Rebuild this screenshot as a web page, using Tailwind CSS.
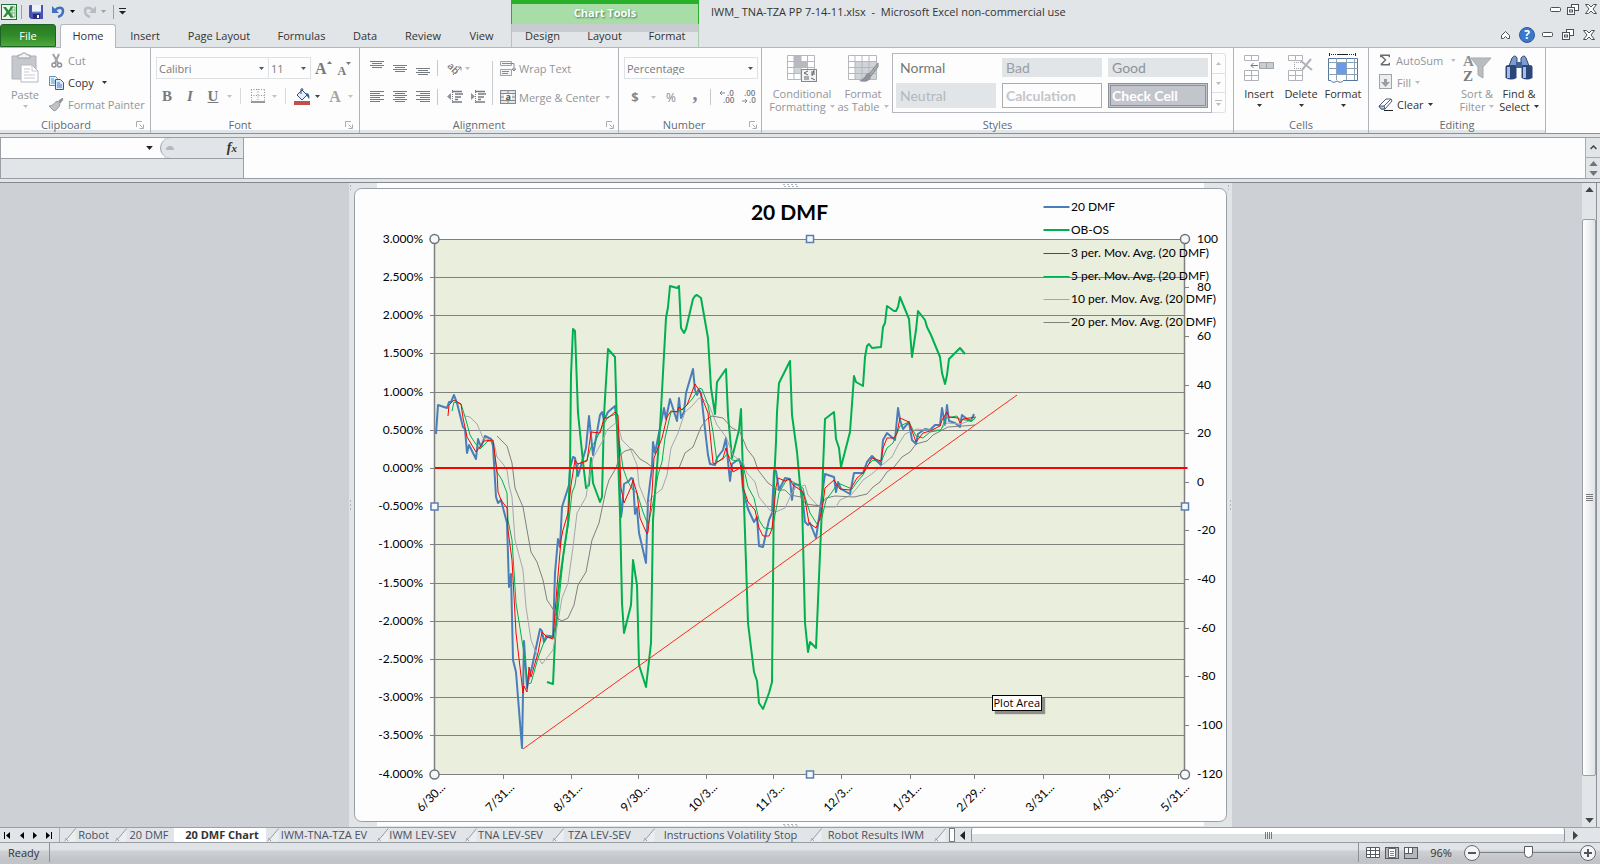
<!DOCTYPE html>
<html lang="en">
<head>
    <meta charset="UTF-8">
    <meta name="viewport" content="width=device-width, initial-scale=1.0">
    <title>IWM_ TNA-TZA PP 7-14-11.xlsx - Microsoft Excel</title>
    <script src="https://cdn.jsdelivr.net/npm/@tailwindcss/browser@4"></script>
</head>

<body class="flex flex-col h-screen overflow-hidden bg-[#e1e5e8] font-['Open_Sans',sans-serif] text-[11px] leading-[13px] text-[#333]">

    <!-- Shared icon shapes -->
    <svg class="hidden">
        <symbol id="down" viewBox="0 0 5 3"><path d="M0 0h5L2.500 3z" fill="currentColor"/></symbol>
        <symbol id="launch" viewBox="0 0 8 8"><path d="M.5 6V.5H6M3.500 3.500l3 3M7.500 3.500v4h-4" fill="none" stroke="#a9adb3"/></symbol>
        <symbol id="min" viewBox="0 0 11 5"><rect x=".5" y=".5" width="10" height="4" rx="1" fill="#fff" stroke="#4c5057"/></symbol>
        <symbol id="restore" viewBox="0 0 12 11"><rect x="4.500" y=".5" width="7" height="6" fill="#fff" stroke="#4c5057"/><rect x=".5" y="3.500" width="7" height="7" fill="#fff" stroke="#4c5057"/><rect x="2.500" y="6" width="3" height="2" fill="#fff" stroke="#4c5057"/></symbol>
        <symbol id="close" viewBox="0 0 12 10"><path d="M.5.5h3L6 3 8.500.5h3L8 5l3.500 4.500h-3L6 7 3.500 9.500h-3L4 5z" fill="#fff" stroke="#4c5057"/></symbol>
        <symbol id="slash" viewBox="0 0 14 15"><path d="M0 14.500C4 14 5 9 13 .5V14.500z" fill="#eceff1"/><path d="M1 14Q3 13 13 .5M2 11l3 3" fill="none" stroke="#8e9299"/></symbol>
    </svg>

    <!-- Title bar and ribbon tabs -->
    <header class="flex shrink-0 h-12">
        <div class="flex flex-col w-[511px] shrink-0">
            <div class="flex items-center h-6 pb-px pl-[1px]">
                <button aria-label="Excel"><svg width="16" height="16" viewBox="0 0 16 16"><rect x=".5" y=".5" width="15" height="15" fill="#eef7ea" stroke="#1f7238"/><path d="M9 3h5v10H9M11 3v10M9 6h5M9 9h5" stroke="#7db882" fill="none"/><path d="M2 3h3l2.500 3.500L10 2.500h2.500L9 8l3.500 5.500h-3L7 10l-2.500 3H2l3.500-5z" fill="#2c8a3c"/></svg></button>
                <i class="w-px h-3.5 ml-1 bg-[#9a9ea5]"></i>
                <button aria-label="Save" class="ml-[7px]"><svg width="15" height="14" viewBox="0 0 15 14"><path d="M0 1q0-1 1-1h13v14H2l-2-2z" fill="#4b4fb8"/><rect x="3" width="9" height="7" fill="#eef3fb"/><path d="M3 7h9" stroke="#6fa6e0"/><rect x="4" y="9" width="7" height="5" fill="#2b2e70"/><rect x="8" y="10" width="2" height="3" fill="#fff"/></svg></button>
                <button aria-label="Undo" class="ml-2"><svg width="13" height="13" viewBox="0 0 13 13"><path d="M3 5.500C6 1.500 11 2 11 6c0 3-2 5-5 6" fill="none" stroke="#3f6fc1" stroke-width="2.500"/><path d="M0 1v7h7z" fill="#3f6fc1"/></svg></button>
                <svg class="w-[5px] h-[3px] ml-[5px] text-black"><use href="#down"/></svg>
                <button aria-label="Redo" class="ml-2"><svg width="13" height="13" viewBox="0 0 13 13"><path d="M10 5.500C7 1.500 2 2 2 6c0 3 2 5 5 6" fill="none" stroke="#b9bdc2" stroke-width="2.500"/><path d="M13 1v7H6z" fill="#b9bdc2"/></svg></button>
                <svg class="w-[5px] h-[3px] ml-[5px] text-[#9a9ea5]"><use href="#down"/></svg>
                <i class="w-px h-3.5 ml-[7px] bg-[#9a9ea5]"></i>
                <button aria-label="Customize" class="ml-[5px]"><svg width="7" height="7" viewBox="0 0 7 7"><path d="M0 .5h7" stroke="#222"/><path d="M0 3h7L3.500 6.500z" fill="#222"/></svg></button>
            </div>
            <nav class="flex h-6 border-b border-[#b3b7bd]">
                <button class="w-14 h-[23px] text-white border border-[#1d6326] rounded-t-[3px] bg-linear-to-b from-[#2b7a22] via-[#2f8a2a] to-[#4fa83a]">File</button>
                <button class="w-14 h-6 ml-1 pb-0.5 border border-b-0 border-[#b3b7bd] rounded-t-[3px] bg-[#fdfdfd]">Home</button>
                <button class="w-[58px]">Insert</button>
                <button class="w-[90px]">Page Layout</button>
                <button class="w-[75px]">Formulas</button>
                <button class="w-[52px]">Data</button>
                <button class="w-16">Review</button>
                <button class="w-[53px]">View</button>
            </nav>
        </div>
        <div class="flex flex-col w-[188px] shrink-0 border-b border-[#b3b7bd]">
            <div class="h-[25px] border-x border-t-4 border-[#28b028] bg-[#a9dda7] text-center font-bold leading-[18px] text-white [text-shadow:1px_1px_2px_#3b7a4a]">Chart Tools</div>
            <nav class="flex flex-1 -mt-px bg-linear-to-b from-[#c8ccd0] from-35% to-[#e1e5e8] to-35% border-x border-[#a9cbb0]">
                <button class="w-[61px]">Design</button>
                <button class="w-[63px]">Layout</button>
                <button class="w-[62px]">Format</button>
            </nav>
        </div>
        <div class="flex flex-col flex-1 justify-between border-b border-[#b3b7bd]">
            <div class="flex justify-between h-6 pl-3 pr-[3px]">
                <h1 class="pt-[5px] whitespace-pre">IWM_ TNA-TZA PP 7-14-11.xlsx  -  Microsoft Excel non-commercial use</h1>
                <div class="flex items-center h-[18px] gap-1.5">
                    <button aria-label="Minimize"><svg class="w-[11px] h-[5px]"><use href="#min"/></svg></button>
                    <button aria-label="Restore"><svg class="w-3 h-[11px]"><use href="#restore"/></svg></button>
                    <button aria-label="Close"><svg class="w-3 h-2.5"><use href="#close"/></svg></button>
                </div>
            </div>
            <div class="flex items-center justify-end h-[23px] gap-[9px] pb-0.5 pr-[5px]">
                <button aria-label="Minimize ribbon"><svg width="9" height="8" viewBox="0 0 9 8"><path d="M.5 4.500l4-4 4 4v3h-2l-2-2-2 2h-2z" fill="#fff" stroke="#4c5057"/></svg></button>
                <button aria-label="Help" class="w-4 h-4 -mr-0.5 rounded-full bg-[#3c78c8] border border-[#2a5ca8] text-white font-bold text-[12px] leading-[14px]">?</button>
                <button aria-label="Minimize workbook"><svg class="w-[11px] h-[5px]"><use href="#min"/></svg></button>
                <button aria-label="Restore workbook"><svg class="w-3 h-[11px]"><use href="#restore"/></svg></button>
                <button aria-label="Close workbook"><svg class="w-3 h-2.5"><use href="#close"/></svg></button>
            </div>
        </div>
    </header>

    <main class="contents">
    <!-- Ribbon -->
    <div class="flex shrink-0 h-[86px] bg-[#fdfdfd] border-b border-[#8c9097] text-[#929599]">

        <section class="flex flex-col w-[151px] shrink-0 border-r border-[#b0b4ba]">
            <div class="flex h-[68px] pt-px pl-[10px]">
                <button class="flex flex-col items-center w-[30px] pt-[3px]">
                    <svg width="28" height="31" viewBox="0 0 28 31"><path d="M1 4h24v23H1z" fill="#c5c9ce" stroke="#aeb2b7"/><path d="M7 6V3h3q0-2 3-2t3 2h3v3z" fill="#f3f4f6" stroke="#9a9ea3"/><path d="M10 13h11l6 6v11H10z" fill="#fff" stroke="#b4b7bc"/><path d="M21 13v6h6M13 17h6M13 20h5M13 23h11M13 26h11" fill="none" stroke="#c6c9ce"/></svg>
                    <span class="mt-[5px]">Paste</span>
                    <svg class="w-[5px] h-[3px] mt-1 text-[#b9bdc2]"><use href="#down"/></svg>
                </button>
                <div class="flex flex-col ml-[9px]">
                    <button class="flex items-center h-[22px] gap-1"><svg width="15" height="15" viewBox="0 0 15 15"><path d="M4 1l5 9M10 1L6 10" stroke="#9fa3a8" stroke-width="2"/><circle cx="5" cy="12" r="2" fill="none" stroke="#8e9297" stroke-width="1.500"/><circle cx="10.500" cy="12" r="2" fill="none" stroke="#8e9297" stroke-width="1.500"/></svg>Cut</button>
                    <button class="flex items-center h-[22px] gap-1 text-[#333]"><svg width="15" height="15" viewBox="0 0 15 15"><path d="M.5 1.500h6l2 2v7h-8z" fill="#e8f3fc" stroke="#5f8db8"/><path d="M2 4h3M2 6h4M2 8h4" stroke="#4f9ad6"/><path d="M6.500 4.500h5l3 3v7h-8z" fill="#dbe9fb" stroke="#2d5ea8"/><path d="M8 8h3M8 10h5M8 12h5" stroke="#3c78c8"/></svg>Copy<svg class="w-[5px] h-[3px] ml-1"><use href="#down"/></svg></button>
                    <button class="flex items-center h-[22px] gap-1"><svg width="15" height="15" viewBox="0 0 15 15"><path d="M9 4l4-3q2 0 1 2l-3 4z" fill="#8f9398"/><path d="M0 9c4 0 5-3 8-5l3 4c-2 3-3 5-6 6z" fill="#bfc3c8" stroke="#94989d"/></svg>Format Painter</button>
                </div>
            </div>
            <div class="flex items-center h-[17px] border-b-[3px] border-[#e1e5e8] text-[#5f6b76] pr-1.5"><h2 class="flex-1 pt-0.5 pr-1 text-center">Clipboard</h2><button aria-label="Clipboard options"><svg class="w-2 h-2 mt-1"><use href="#launch"/></svg></button></div>
        </section>

        <section class="flex flex-col w-[209px] shrink-0 border-r border-[#b0b4ba]">
            <div class="flex flex-col h-[68px] pt-[9px] pl-[5px]">
                <div class="flex h-[22px] text-[#777b80]">
                    <label class="flex items-center w-[113px] border border-[#dfe2e5] pr-1"><select aria-label="Font" class="flex-1 min-w-0 h-5 appearance-none outline-none pl-0.5"><option>Calibri</option></select><svg class="w-[5px] h-[3px] text-[#555]"><use href="#down"/></svg></label>
                    <label class="flex items-center w-[43px] -ml-px border border-[#dfe2e5] pr-1"><select aria-label="Font size" class="flex-1 min-w-0 h-5 appearance-none outline-none pl-0.5"><option>11</option></select><svg class="w-[5px] h-[3px] text-[#555]"><use href="#down"/></svg></label>
                    <button class="flex items-start ml-1 font-['Liberation_Serif',serif] font-bold text-[16px] leading-[24px]">A<svg class="w-[5px] h-[3px] mt-1 rotate-180"><use href="#down"/></svg></button>
                    <button class="flex items-start ml-1.5 font-['Liberation_Serif',serif] font-bold text-[12px] leading-[28px]">A<svg class="w-[5px] h-[3px] mt-[5px]"><use href="#down"/></svg></button>
                </div>
                <div class="flex items-center h-[22px] mt-1.5 pl-1 font-['Liberation_Serif',serif] text-[15px] text-[#777b80]">
                    <button class="w-[14px] font-bold">B</button>
                    <button class="w-[14px] ml-[9px] italic font-bold">I</button>
                    <button class="w-[14px] ml-[9px] underline font-bold">U</button>
                    <svg class="w-[5px] h-[3px] ml-[7px] text-[#c0c3c8]"><use href="#down"/></svg>
                    <i class="w-px h-4 ml-2 bg-[#d5d8dc]"></i>
                    <button aria-label="Borders" class="ml-[10px]"><svg width="14" height="14" viewBox="0 0 14 14"><path d="M.5.5v12M13.500.5v12M0 .5h14M7 0v12M0 6.500h14" stroke="#8e9297" stroke-dasharray="1 1.500" fill="none"/><path d="M0 13h14" stroke="#777" stroke-width="1.500"/></svg></button>
                    <svg class="w-[5px] h-[3px] ml-[7px] text-[#c0c3c8]"><use href="#down"/></svg>
                    <i class="w-px h-4 ml-2 bg-[#d5d8dc]"></i>
                    <button aria-label="Fill color" class="ml-2"><svg width="16" height="17" viewBox="0 0 16 17"><path d="M3 7l5-5 5 5-5 5z" fill="#e5eefa" stroke="#2f4f86"/><path d="M7 6V1q2-1 2 1" fill="none" stroke="#2f4f86"/><path d="M12 5c3 0 4 3 3 6l-2-3z" fill="#2d5ea8"/><rect y="13" width="16" height="4" fill="#c0504d"/></svg></button>
                    <svg class="w-[5px] h-[3px] ml-[5px] text-[#444]"><use href="#down"/></svg>
                    <button class="w-3 ml-[9px] font-bold text-[16px] text-[#a0a4a8]">A</button>
                    <svg class="w-[5px] h-[3px] ml-[7px] text-[#c0c3c8]"><use href="#down"/></svg>
                </div>
            </div>
            <div class="flex items-center h-[17px] border-b-[3px] border-[#e1e5e8] text-[#5f6b76] pr-1.5"><h2 class="flex-1 pt-0.5 pr-4 text-center">Font</h2><button aria-label="Font options"><svg class="w-2 h-2 mt-1"><use href="#launch"/></svg></button></div>
        </section>

        <section class="flex flex-col w-[259px] shrink-0 border-r border-[#b0b4ba]">
            <div class="flex h-[68px] pt-[9px] pl-[10px]">
                <div class="flex flex-col w-[122px] gap-[7px]">
                    <div class="flex items-center h-[22px] gap-[9px]">
                        <button aria-label="Top align"><svg width="14" height="16" viewBox="0 0 14 16"><path d="M0 1.500h14M2 3.500h10M0 5.500h14M2 7.500h10" stroke="#777b80"/></svg></button>
                        <button aria-label="Middle align"><svg width="14" height="16" viewBox="0 0 14 16"><path d="M0 5.500h14M2 7.500h10M0 9.500h14M2 11.500h10" stroke="#777b80"/></svg></button>
                        <button aria-label="Bottom align"><svg width="14" height="16" viewBox="0 0 14 16"><path d="M0 8.500h14M2 10.500h10M0 12.500h14M2 14.500h10" stroke="#777b80"/></svg></button>
                        <i class="w-px h-4 -ml-0.5 bg-[#c4c8cd]"></i>
                        <button aria-label="Orientation" class="flex items-center"><svg class="overflow-visible" width="16" height="15" viewBox="0 0 16 15"><text x="0" y="9" transform="rotate(45 4 7)" font-family="Open Sans" font-size="10" font-weight="600" fill="#777b80">ab</text><path d="M6 14l8-8M10.500 6H14v3.500" fill="none" stroke="#85898e"/></svg><svg class="w-[5px] h-[3px] ml-0.5 text-[#b9bdc2]"><use href="#down"/></svg></button>
                    </div>
                    <div class="flex items-center h-[22px] gap-[9px]">
                        <button aria-label="Align left"><svg width="14" height="12" viewBox="0 0 14 12"><path d="M0 .5h14M0 2.500h10M0 4.500h14M0 6.500h10M0 8.500h14M0 10.500h10" stroke="#777b80"/></svg></button>
                        <button aria-label="Center"><svg width="14" height="12" viewBox="0 0 14 12"><path d="M0 .5h14M2 2.500h10M0 4.500h14M2 6.500h10M0 8.500h14M2 10.500h10" stroke="#777b80"/></svg></button>
                        <button aria-label="Align right"><svg width="14" height="12" viewBox="0 0 14 12"><path d="M0 .5h14M4 2.500h10M0 4.500h14M4 6.500h10M0 8.500h14M4 10.500h10" stroke="#777b80"/></svg></button>
                        <i class="w-px h-4 -ml-0.5 bg-[#c4c8cd]"></i>
                        <button aria-label="Decrease indent"><svg width="16" height="14" viewBox="0 0 16 14"><path d="M5 1.500h10M8 4h8M8 7h6M8 9.500h3M5 12h10" stroke="#777b80" stroke-width="1.500"/><path d="M5.500 0v14" stroke="#777b80" stroke-dasharray="1 1"/><path d="M0 6.500L4 3v7z" fill="#8e9297"/></svg></button>
                        <button aria-label="Increase indent" class="-ml-0.5"><svg width="16" height="14" viewBox="0 0 16 14"><path d="M5 1.500h10M8 4h8M8 7h6M8 9.500h3M5 12h10" stroke="#777b80" stroke-width="1.500"/><path d="M5.500 0v14" stroke="#777b80" stroke-dasharray="1 1"/><path d="M5 6.500L1 3v7z" fill="#8e9297"/></svg></button>
                    </div>
                </div>
                <div class="w-px h-11 mt-1 bg-[#c9cdd2]"></div>
                <div class="flex flex-col gap-[7px] ml-[7px]">
                    <button class="flex items-center h-[22px] gap-[3px]"><svg width="16" height="15" viewBox="0 0 16 15"><path d="M.5.5h11v4H.5zM.5 8.500h11v6H.5z" fill="#f4f5f6" stroke="#a0a4a9"/><path d="M2 2.500h12v6M2 10.500h7M2 12.500h6M14 10l-2-2h4z" stroke="#85898e" fill="none"/></svg>Wrap Text</button>
                    <button class="flex items-center h-[22px] gap-[3px]"><svg width="16" height="14" viewBox="0 0 16 14"><rect x=".5" y=".5" width="15" height="13" fill="#e3e5e8" stroke="#85898e"/><path d="M0 3.500h16M0 10.500h16M8 0v3.500M8 10.500V14M1 7h3M12 7h3" stroke="#85898e"/><path d="M4 4h8v6H4z" fill="#fff"/><text x="5.500" y="10" font-family="Open Sans" font-weight="bold" font-size="9" fill="#555">a</text></svg>Merge &amp; Center<svg class="w-[5px] h-[3px] ml-0.5 text-[#b9bdc2]"><use href="#down"/></svg></button>
                </div>
            </div>
            <div class="flex items-center h-[17px] border-b-[3px] border-[#e1e5e8] text-[#5f6b76] pr-1"><h2 class="flex-1 pt-0.5 pr-2 text-center">Alignment</h2><button aria-label="Alignment options"><svg class="w-2 h-2 mt-1"><use href="#launch"/></svg></button></div>
        </section>

        <section class="flex flex-col w-[143px] shrink-0 border-r border-[#b0b4ba]">
            <div class="flex flex-col h-[68px] pt-[9px] pl-[5px] pr-[3px]">
                <label class="flex items-center w-full h-[22px] border border-[#dfe2e5] pr-1 text-[#777b80]"><select aria-label="Number format" class="flex-1 min-w-0 h-5 appearance-none outline-none pl-0.5"><option>Percentage</option></select><svg class="w-[5px] h-[3px] text-[#555]"><use href="#down"/></svg></label>
                <div class="flex items-center h-[22px] mt-[7px] pl-[7px] text-[#85898e]">
                    <button class="w-2 font-bold text-[13px]">$</button>
                    <svg class="w-[5px] h-[3px] ml-3 text-[#c0c3c8]"><use href="#down"/></svg>
                    <button class="w-3 ml-[9px] text-[12px]">%</button>
                    <button class="w-1.5 ml-[15px] font-['Liberation_Serif',serif] font-bold text-[20px] leading-5 pb-2">,</button>
                    <i class="w-px h-4 ml-3 bg-[#c4c8cd]"></i>
                    <button aria-label="Increase decimal" class="ml-2"><svg class="overflow-visible" width="17" height="14" viewBox="0 0 17 14" font-family="Open Sans" font-size="8" font-weight="600" fill="#777b80"><path d="M1 3h5M3 1L1 3l2 2" stroke="#85898e" fill="none"/><text x="8" y="6">.0</text><text x="4" y="13">.00</text></svg></button>
                    <button aria-label="Decrease decimal" class="ml-[5px]"><svg class="overflow-visible" width="17" height="14" viewBox="0 0 17 14" font-family="Open Sans" font-size="8" font-weight="600" fill="#777b80"><text x="3" y="6">.00</text><text x="8" y="13">.0</text><path d="M1 11h5M4 9l2 2-2 2" stroke="#85898e" fill="none"/></svg></button>
                </div>
            </div>
            <div class="flex items-center h-[17px] border-b-[3px] border-[#e1e5e8] text-[#5f6b76] pr-1"><h2 class="flex-1 pt-0.5 text-center">Number</h2><button aria-label="Number options"><svg class="w-2 h-2 mt-1"><use href="#launch"/></svg></button></div>
        </section>

        <section class="flex flex-col w-[472px] shrink-0 border-r border-[#b0b4ba]">
            <div class="flex h-[68px] pt-[5px] pl-[6px]">
                <button class="flex flex-col items-center w-[68px]">
                    <svg width="32" height="30" viewBox="0 0 32 30"><path d="M1.500 2.500h27v24h-27z" fill="#fff" stroke="#b4b7bc"/><path d="M8 3h7v6h6v6H8z" fill="#b7bbc0"/><path d="M8 15h7v6H8z" fill="#d0d3d7"/><path d="M8 2v24M15 2v24M21.500 2v24M1 8.500h27M1 14.500h27M1 20.500h27" stroke="#b4b7bc"/><rect x="15.500" y="16.500" width="15" height="12" fill="#f2f3f4" stroke="#85898e"/><path d="M22 18l-4 2 4 2M18 24h5M18 26h5M25 19h4M25 21h4M28 17l-2 6M25 25l4 2" stroke="#666" fill="none"/></svg>
                    <span class="mt-1">Conditional</span>
                    <span class="flex items-center gap-1">Formatting <svg class="w-[5px] h-[3px] text-[#b9bdc2]"><use href="#down"/></svg></span>
                </button>
                <button class="flex flex-col items-center w-[54px]">
                    <svg width="32" height="30" viewBox="0 0 32 30"><path d="M1.500 2.500h28v24h-28z" fill="#fff" stroke="#b4b7bc"/><path d="M8 8h21v18H8z" fill="#d0d4d9"/><path d="M8 2v24M15 2v24M22 2v24M1 8.500h28M1 14.500h28M1 20.500h28" stroke="#b4b7bc"/><path d="M31 10L22 21l2 2 7-9z" fill="#a6aaaf" stroke="#888"/><path d="M22 20c-4 0-3 5-10 8 6 2 12 0 12-5z" fill="#8e9297"/></svg>
                    <span class="mt-1">Format</span>
                    <span class="flex items-center gap-1 whitespace-nowrap">as Table <svg class="w-[5px] h-[3px] text-[#b9bdc2]"><use href="#down"/></svg></span>
                </button>
                <div class="grid grid-cols-[100px_100px_100px] gap-x-1.5 gap-y-1.5 h-[60px] ml-0.5 py-1 px-[3px] border border-[#b3b7bd] font-['Lato',sans-serif] text-[14px] text-left">
                    <button class="pl-1 text-left text-[#777]">Normal</button>
                    <button class="pl-1 text-left bg-[#e1e5e8] text-[#9a9da1]">Bad</button>
                    <button class="pl-1 text-left bg-[#e1e5e8] text-[#8e9297]">Good</button>
                    <button class="pl-1 text-left bg-[#e1e5e8] text-[#b4b8bc]">Neutral</button>
                    <button class="pl-[3px] text-left font-bold border border-[#a9adb2] text-[#c2c5cb]">Calculation</button>
                    <button class="pl-px text-left font-bold border-[3px] border-double border-[#8c9097] bg-[#c3c5cc] text-white">Check Cell</button>
                </div>
                <div class="flex flex-col w-[14px] h-[60px] border border-l-0 border-[#dfe2e5] rounded-r-[3px] text-[#b9bdc2] divide-y divide-[#dfe2e5]">
                    <button aria-label="Scroll up" class="flex-1 flex items-center justify-center"><svg class="w-[5px] h-[3px] rotate-180"><use href="#down"/></svg></button>
                    <button aria-label="Scroll down" class="flex-1 flex items-center justify-center"><svg class="w-[5px] h-[3px]"><use href="#down"/></svg></button>
                    <button aria-label="More styles" class="flex-1 flex flex-col items-center justify-center gap-0.5"><i class="w-[7px] h-px bg-[#b9bdc2]"></i><svg class="w-[5px] h-[3px]"><use href="#down"/></svg></button>
                </div>
            </div>
            <h2 class="h-[17px] pt-0.5 text-center border-b-[3px] border-[#e1e5e8] text-[#5f6b76]">Styles</h2>
        </section>

        <section class="flex flex-col w-[135px] shrink-0 border-r border-[#b0b4ba]">
            <div class="flex h-[68px] pt-[5px] pl-[5px] text-[#333]">
                <button class="flex flex-col items-center w-10">
                    <svg width="32" height="30" viewBox="0 0 32 30"><path d="M1.500 2.500h14v5h-14zM8.500 2v5M1.500 17.500h14v10h-14zM8.500 17v10M1 22.500h14" fill="#fff" stroke="#b0b3b8"/><path d="M16.500 9.500h14v6h-14z" fill="#c9ccd0" stroke="#a0a3a8"/><path d="M23.500 9v7" stroke="#a0a3a8"/><path d="M8 12.500h7M10.500 10L8 12.500l2.500 2.500" fill="none" stroke="#777"/></svg>
                    <span class="mt-1">Insert</span>
                    <svg class="w-[5px] h-[3px] mt-1"><use href="#down"/></svg>
                </button>
                <button class="flex flex-col items-center w-[44px]">
                    <svg width="28" height="30" viewBox="0 0 28 30"><path d="M1.500 2.500h14v5h-14zM8.500 2v5M1.500 17.500h14v10h-14zM8.500 17v10M1 22.500h14" fill="#fff" stroke="#b0b3b8"/><path d="M7 9.500h8M7 15.500h8M7.500 9v7" fill="none" stroke="#a0a3a8" stroke-dasharray="1 1"/><path d="M14 8l11 9M24 6l-9 11" fill="none" stroke="#b0b3b8" stroke-width="2"/></svg>
                    <span class="mt-1">Delete</span>
                    <svg class="w-[5px] h-[3px] mt-1"><use href="#down"/></svg>
                </button>
                <button class="flex flex-col items-center w-10">
                    <svg width="31" height="30" viewBox="0 0 31 30"><path d="M1.500 0v3M27.500 0v3" stroke="#222"/><path d="M3 1.500h23" stroke="#222" stroke-dasharray="1 1"/><path d="M9 1.500h11" stroke="#222"/><path d="M.5 5.500h29v22h-29z" fill="#fff" stroke="#56779c"/><path d="M.5 9.500h29M.5 15.500h29M.5 21.500h29M8.500 5v22M18.500 5v22M26.500 5v22" stroke="#8ba2bb"/><path d="M9 10h9v11H9z" fill="#6a9be8"/><path d="M2 27q3 4 7 1q4 3 7-1" fill="#fff" stroke="#56779c"/></svg>
                    <span class="mt-1">Format</span>
                    <svg class="w-[5px] h-[3px] mt-1"><use href="#down"/></svg>
                </button>
            </div>
            <h2 class="h-[17px] pt-0.5 text-center border-b-[3px] border-[#e1e5e8] text-[#5f6b76]">Cells</h2>
        </section>

        <section class="flex flex-col w-[177px] shrink-0 border-r border-[#b0b4ba]">
            <div class="flex h-[68px] pt-px pl-[9px]">
                <div class="flex flex-col w-[78px]">
                    <button class="flex items-center h-[22px] gap-1"><svg width="15" height="12" viewBox="0 0 15 12"><path d="M3 3V1h9v2M3 1l5 5-5 5M3 11h9V9" fill="none" stroke="#666a70" stroke-width="1.500"/></svg>AutoSum<svg class="w-[5px] h-[3px] ml-1 text-[#b9bdc2]"><use href="#down"/></svg></button>
                    <button class="flex items-center h-[22px] gap-1"><svg width="15" height="16" viewBox="0 0 15 16"><rect x="1.500" y=".5" width="12" height="14" fill="#eceef0" stroke="#a0a3a8"/><path d="M6 5h3v3h3l-4.500 5L3 8h3z" fill="#9a9ea3"/></svg>Fill<svg class="w-[5px] h-[3px] text-[#b9bdc2]"><use href="#down"/></svg></button>
                    <button class="flex items-center h-[22px] gap-1 text-[#333]"><svg width="15" height="13" viewBox="0 0 15 13"><path d="M1 8l7-7h5l1 2-7 8H3z" fill="#fff" stroke="#4c5a78"/><path d="M1 8h5l1 3H3z" fill="#b9cdf0" stroke="#4c5a78"/><path d="M6 8l7-7" stroke="#4c5a78"/><path d="M6 12.500h9" stroke="#222"/></svg>Clear<svg class="w-[5px] h-[3px]"><use href="#down"/></svg></button>
                </div>
                <button class="flex flex-col items-center w-[42px] pt-1">
                    <svg width="30" height="30" viewBox="0 0 30 30"><path d="M9 5h20l-8 9v11l-5-3v-8z" fill="#b9bdc2" stroke="#a6a9ae"/><text x="1" y="13" font-family="Liberation Serif" font-weight="bold" font-size="15" fill="#8e9297">A</text><text x="1" y="28" font-family="Liberation Serif" font-weight="bold" font-size="15" fill="#777b80">Z</text></svg>
                    <span class="mt-1 whitespace-nowrap">Sort &amp;</span>
                    <span class="flex items-center gap-1">Filter <svg class="w-[5px] h-[3px] text-[#b9bdc2]"><use href="#down"/></svg></span>
                </button>
                <button class="flex flex-col items-center w-[42px] pt-1 text-[#333]">
                    <svg width="28" height="30" viewBox="0 0 28 30"><path d="M7 5q3-4 5 0v8H4zM16 5q3-4 5 0l3 8h-8z" fill="#7d9cc9" stroke="#2c467a"/><path d="M.5 14q0-2 3-2h6q2 0 2 2v11q-5 3-11 0zM16.500 14q0-2 2-2h6q3 0 3 2v11q-6 3-11 0z" fill="#2c467a"/><path d="M2 14h3v11H2zM18 14h3v11h-3z" fill="#9fbfe8"/><path d="M11 9h6v6h-6z" fill="#41609a"/></svg>
                    <span class="mt-1 whitespace-nowrap">Find &amp;</span>
                    <span class="flex items-center gap-1">Select <svg class="w-[5px] h-[3px]"><use href="#down"/></svg></span>
                </button>
            </div>
            <h2 class="h-[17px] pt-0.5 text-center border-b-[3px] border-[#e1e5e8] text-[#5f6b76]">Editing</h2>
        </section>
    </div>

    <!-- Formula bar -->
    <div class="flex shrink-0 h-[42px] mt-[3px] border-y border-[#9a9ea5]">
        <div class="flex flex-col w-[244px] border-x border-[#9a9ea5]">
            <div class="flex h-[21px] border-b border-[#9a9ea5]">
                <div class="flex items-center w-[163px] bg-[#fdfdfd]">
                    <input aria-label="Name box" class="flex-1 min-w-0 outline-none">
                    <svg class="w-[7px] h-1 mr-[11px] text-[#222]"><use href="#down"/></svg>
                </div>
                <div class="flex items-center flex-1 -ml-1 rounded-l-full border-l border-[#9a9ea5] bg-[#e1e5e8]">
                    <i class="w-2 h-1 ml-[5px] rounded-t-full bg-[#b5b8bc]"></i>
                    <button aria-label="Insert function" class="ml-auto mr-1.5 font-['Liberation_Serif',serif] italic font-bold text-[14px]">f<span class="text-[11px]">x</span></button>
                </div>
            </div>
        </div>
        <textarea aria-label="Formula bar" class="flex-1 resize-none outline-none bg-[#fdfdfd]"></textarea>
        <div class="flex flex-col w-[15px] border-l border-[#a9adb3] text-[#6f737a]">
            <button aria-label="Collapse" class="flex items-center justify-center h-5 border-b border-[#a9adb3]"><svg width="7" height="5" viewBox="0 0 7 5"><path d="M.5 4l3-3 3 3" fill="none" stroke="#444" stroke-width="1.500"/></svg></button>
            <button aria-label="Previous line" class="flex items-center justify-center flex-1"><svg class="w-[9px] h-[5px] rotate-180"><use href="#down"/></svg></button>
            <button aria-label="Next line" class="flex items-center justify-center flex-1"><svg class="w-[9px] h-[5px]"><use href="#down"/></svg></button>
        </div>
    </div>

    <!-- Chart sheet -->
    <div class="flex flex-1 min-h-0 mt-[3px] border-t border-[#85898f] bg-[#cdd0d4]">
        <div class="flex justify-center flex-1 min-w-0 pr-0.5">
            <div class="relative w-[883px] h-full shrink-0">
                <svg id="chart" class="block w-full h-full" viewBox="349 183 883 644" font-family="Lato, sans-serif" font-size="12" fill="#000">
                    <path d="M349 183h883v644H349z" fill="#e1e5e8"/>
                    <path d="M377 183h827v5H377zM377 822h827v4H377z" fill="#fdfdfd"/>
                    <rect x="354.500" y="188.500" width="872" height="633" rx="7" fill="#fdfdfd" stroke="#9a9ea5"/>
                    <path d="M783 184.500h16M784 186.500h14M783 824.500h16M784 826h14M350.500 185v5M350.500 500v12M1230.500 500v12M1228.500 185v5" stroke="#b0b4ba" stroke-dasharray="2 2"/>
                    <rect x="434" y="239" width="751" height="536" fill="#eaeedd"/>
                    <g id="grid" stroke="#808080"></g>
                    <g id="labels"></g>
                    <g fill="none" stroke-linejoin="round">
                        <polyline stroke="#4a7ebb" stroke-width="2" points="436,434 438,405 447,408 449,402 451,402 454,395 457,403 463,427 465,429 467,453 469,445 476,459 478,439 481,447 485,436 491,439 493,446 496,497 498,503 501,500 507,523 509,587 511,574 513,660 516,672 522,748 524,641 527,688 529,677 532,667 540,629 542,631 544,642 547,637 553,637 555,573 558,539 560,547 562,507 569,485 570,468 573,457 575,458 578,476 586,448 589,416 593,455 600,415 602,412 604,420 608,412 615,406 618,435 620,495 621,517 622,510 624,484 629,481 631,478 633,479 635,514 637,508 639,533 646,563 648,500 650,483 652,468 653,442 655,453 664,408 666,419 670,399 677,421 679,398 681,418 684,412 686,393 693,369 695,390 697,395 699,390 701,393 706,438 708,455 710,464 715,465 717,458 723,450 726,438 728,462 730,481 732,464 739,459 741,465 743,490 748,509 754,522 757,517 759,546 763,547 769,520 772,513 774,471 776,471 779,490 785,478 790,479 792,500 794,484 799,485 802,492 805,522 808,525 810,523 816,538 819,518 822,495 825,474 834,477 836,492 838,482 841,489 850,494 854,473 863,473 867,462 872,456 881,465 883,440 887,433 895,440 898,408 900,420 903,429 909,422 912,440 916,444 918,434 925,429 930,430 935,425 940,425 942,408 945,425 947,405 949,421 955,423 960,427 962,415 967,419 971,421 974,414"/>
                        <polyline stroke="#00b050" stroke-width="2" points="547,682 553,684 555,640 558,593 563,557 568,523 570,468 571,375 573,329 575,331 578,413 583,462 586,488 589,485 591,458 593,483 600,502 602,497 604,415 608,349 615,357 617,428 620,513 622,603 624,633 631,605 633,560 637,585 639,665 646,687 651,643 653,520 656,480 660,428 666,318 668,307 670,286 677,288 679,286 681,328 684,333 686,329 693,299 695,296 697,295 701,298 708,338 711,388 715,414 717,382 726,369 728,415 732,458 739,430 741,409 743,475 745,533 748,623 754,672 757,681 759,703 763,709 769,693 772,682 774,483 776,442 777,412 779,383 790,361 792,415 797,452 800,485 802,500 805,623 808,652 810,642 816,648 819,577 822,507 823,468 825,419 834,412 836,439 839,448 841,467 850,432 854,376 856,382 863,386 865,357 867,346 869,344 872,348 881,347 883,327 885,323 887,306 894,311 896,311 898,307 900,297 909,319 912,357 916,330 918,311 925,320 927,327 931,335 940,357 942,373 945,384 947,375 949,359 960,348 965,354"/>
                        <polyline stroke="#a6a6b0" points="465,416 470,417 477,424 483,438 490,440 494,443 497,457 503,464 507,470 509,485 512,497 515,540 523,570 526,607 531,640 537,655 542,664 553,650 557,627 562,598 568,583 573,547 577,513 586,497 589,478 593,458 602,442 607,430 617,422 622,440 630,448 637,465 639,485 647,505 652,497 662,489 667,475 671,448 678,433 685,412 692,406 699,398 703,399 709,405 717,425 726,437 733,455 740,461 743,462 747,473 755,482 759,497 767,507 773,513 785,508 791,495 795,488 805,485 808,495 817,505 825,507 836,507 840,500 851,495 857,488 863,480 873,473 882,465 892,457 898,445 905,434 917,429 927,430 940,430 947,423 960,424 975,419"/>
                        <polyline stroke="#808080" points="497,436 507,446 512,463 515,488 517,493 523,507 527,530 531,552 537,562 543,580 547,600 553,609 557,618 562,621 568,618 574,605 578,585 586,572 592,540 599,523 606,490 609,480 616,468 620,455 625,451 632,449 640,459 647,463 653,468 667,469 679,468 685,453 693,447 701,427 707,419 712,416 723,418 732,428 740,432 747,449 754,458 758,470 768,483 778,490 785,490 790,495 801,497 806,504 820,506 826,498 835,496 854,497 867,494 873,487 880,482 887,472 894,467 902,457 910,452 916,444 927,441 933,435 948,427 963,426 975,425"/>
                        <polyline stroke="#00b050" points="452,411 454,402 461,404 466,420 470,435 475,443 480,449 488,441 493,441 497,472 502,480 507,493 508,520 512,540 516,603 523,647 528,684 531,683 538,658 544,642 546,635 553,636 557,620 561,580 564,550 569,520 572,493 575,485 578,464 587,460 591,447 595,442 602,427 608,417 616,414 618,433 623,468 628,482 633,490 637,493 643,512 648,525 653,503 658,475 662,462 665,438 671,412 680,411 687,405 693,398 699,388 702,389 708,405 713,432 717,462 723,459 727,454 732,460 740,461 743,465 748,487 754,498 759,520 764,528 772,529 776,510 779,493 787,479 795,483 803,488 805,497 810,513 817,524 822,517 826,500 832,492 838,483 852,489 857,482 863,475 868,465 873,460 881,462 887,448 893,443 900,426 909,422 916,436 923,438 930,432 941,430 946,418 957,416 959,419 972,421 975,418"/>
                        <polyline stroke="#ff0000" points="448,416 449,405 454,400 461,404 463,418 467,437 476,452 480,447 484,441 493,440 497,472 498,492 501,500 507,508 508,530 512,560 516,633 523,693 524,686 527,692 529,667 531,677 538,653 542,632 547,637 553,639 557,587 561,540 563,530 568,513 571,485 575,460 578,464 587,461 591,432 600,433 604,418 608,418 615,412 618,415 621,488 624,503 631,487 633,480 637,493 640,518 647,534 648,532 652,493 654,458 662,438 667,417 671,411 677,412 679,407 682,410 687,405 695,384 699,390 708,413 713,463 715,464 723,458 726,448 728,455 733,472 740,468 741,465 743,487 748,502 755,510 759,528 763,536 769,536 772,529 776,487 778,478 785,481 790,479 793,485 803,492 805,500 809,523 816,528 820,518 823,503 825,488 834,480 837,485 840,489 850,490 857,478 863,473 867,467 872,458 881,461 883,448 887,438 894,438 897,433 900,418 909,422 916,442 923,433 930,431 940,426 942,420 947,412 949,417 958,418 960,423 963,419 976,417"/>
                        <path d="M523 749L1017 395" stroke="#ff2a1f"/>
                        <path d="M435 468h752.500" stroke="#ff0000" stroke-width="2"/>
                    </g>
                    <!-- Selection handles -->
                    <g fill="#f4f8fb" stroke="#6f757d" stroke-width="1.500">
                        <circle cx="434.500" cy="239" r="4.500"/><circle cx="1185" cy="239" r="4.500"/><circle cx="434.500" cy="774.500" r="4.500"/><circle cx="1185" cy="774.500" r="4.500"/>
                        <path d="M806.500 235.500h7v7h-7zM806.500 771h7v7h-7zM431 503h7v7h-7zM1181.500 503h7v7h-7z" stroke="#5b7db1"/>
                    </g>
                    <text x="789.500" y="220" font-size="21" font-weight="bold" text-anchor="middle">20 DMF</text>
                    <g id="legend"></g>
                </svg>
                <div class="absolute left-[643px] top-[512px] px-px border border-black bg-white text-black leading-[14px] whitespace-nowrap shadow-[3px_3px_1px_rgba(80,80,80,0.6)]">Plot Area</div>
            </div>
        </div>
        <!-- Vertical scroll bar -->
        <div class="flex flex-col items-center justify-between w-[14px] py-1 bg-[#e1e5e8] text-[#444]">
            <svg class="w-[9px] h-[5px] rotate-180"><use href="#down"/></svg>
            <div class="flex flex-col items-center justify-center w-full gap-px flex-1 mt-[27px] mb-[42px] border border-[#9a9ea5] rounded-[2px] bg-linear-to-r from-white to-[#dfe2e5]">
                <i class="w-[7px] h-px bg-[#777]"></i><i class="w-[7px] h-px bg-[#777]"></i><i class="w-[7px] h-px bg-[#777]"></i><i class="w-[7px] h-px bg-[#777]"></i>
            </div>
            <svg class="w-[9px] h-[5px]"><use href="#down"/></svg>
        </div>
        <div class="w-1 border-l border-[#8c9097] bg-[#e1e5e8]"></div>
    </div>

    <!-- Sheet tabs -->
    <div class="flex shrink-0 h-4 border-y border-[#9a9ea5] bg-[#e1e5e8] leading-[14px] text-[#4b4f60]">
        <div class="flex items-center w-[60px] gap-2 pl-1 border-r border-[#a9adb3] text-[#222]">
            <svg width="6" height="7" viewBox="0 0 6 7"><path d="M0 0h1v7H0zM6 0v7L2 3.500z"/></svg>
            <svg width="5" height="7" viewBox="0 0 5 7" class="ml-0.5"><path d="M4 0v7L0 3.500z"/></svg>
            <svg width="5" height="7" viewBox="0 0 5 7"><path d="M0 0v7l4-3.500z"/></svg>
            <svg width="6" height="7" viewBox="0 0 6 7"><path d="M5 0h1v7H5zM0 0v7l4-3.500z"/></svg>
        </div>
        <nav class="flex pl-[3px] whitespace-nowrap">
            <button class="flex w-[51px]"><svg class="w-3.5 h-[14px]"><use href="#slash"/></svg><span class="flex-1 pr-1">Robot</span></button>
            <button class="flex w-[60px]"><svg class="w-3.5 h-[14px]"><use href="#slash"/></svg><span class="flex-1 pr-1">20 DMF</span></button>
            <button class="w-[92px] pl-1 font-bold bg-white text-[#333]">20 DMF Chart</button>
            <button class="flex w-[110px]"><svg class="w-3.5 h-[14px]"><use href="#slash"/></svg><span class="flex-1 pr-2">IWM-TNA-TZA EV</span></button>
            <button class="flex w-[88px]"><svg class="w-3.5 h-[14px]"><use href="#slash"/></svg><span class="flex-1 pr-2">IWM LEV-SEV</span></button>
            <button class="flex w-[87px]"><svg class="w-3.5 h-[14px]"><use href="#slash"/></svg><span class="flex-1 pr-2">TNA LEV-SEV</span></button>
            <button class="flex w-[91px]"><svg class="w-3.5 h-[14px]"><use href="#slash"/></svg><span class="flex-1 pr-2">TZA LEV-SEV</span></button>
            <button class="flex w-[167px]"><svg class="w-3.5 h-[14px]"><use href="#slash"/></svg><span class="flex-1 pr-1">Instructions Volatility Stop</span></button>
            <button class="flex w-[124px]"><svg class="w-3.5 h-[14px]"><use href="#slash"/></svg><span class="flex-1 pr-1">Robot Results IWM</span></button>
            <svg class="w-3.5 h-[14px]"><use href="#slash"/></svg>
        </nav>
        <i class="w-1.5 ml-0.5 border border-[#777b80] bg-white"></i>
        <div class="flex items-center flex-1 ml-[5px]">
            <svg width="5" height="9" viewBox="0 0 5 9"><path d="M5 0v9L0 4.500z" fill="#222"/></svg>
            <div class="flex items-center justify-center flex-1 h-[14px] gap-px ml-1.5 mr-2 border border-y-0 border-[#8c9097] rounded-[2px] bg-linear-to-b from-white from-40% to-[#dfe2e5] to-40%">
                <i class="w-px h-[7px] bg-[#777]"></i><i class="w-px h-[7px] bg-[#777]"></i><i class="w-px h-[7px] bg-[#777]"></i><i class="w-px h-[7px] bg-[#777]"></i>
            </div>
            <svg width="5" height="9" viewBox="0 0 5 9" class="mr-[22px]"><path d="M0 0v9l5-4.500z" fill="#444"/></svg>
        </div>
    </div>
    </main>

    <!-- Status bar -->
    <footer class="flex items-center shrink-0 h-[21px] pr-1 pb-0.5 bg-linear-to-b from-[#e1e4e7] from-30% via-[#cdd0d4] via-40% to-[#c3c4c8] to-80%">
        <span class="w-[49px] pl-2">Ready</span>
        <i class="w-px h-full bg-[#8c9097]"></i>
        <i class="w-px h-full ml-auto mr-[7px] bg-[#8c9097]"></i>
        <div class="flex items-center gap-[5px]">
            <button aria-label="Normal view"><svg width="14" height="11" viewBox="0 0 14 11"><path d="M.5.5h13v10H.5zM.5 3.500h13M.5 7.500h13M4.500 0v11M9.500 0v11" fill="#fff" stroke="#555a60"/></svg></button>
            <button aria-label="Page layout view"><svg width="14" height="12" viewBox="0 0 14 12"><rect x=".5" y=".5" width="13" height="11" fill="#b4b7bc" stroke="#555a60"/><path d="M3.500 1.500h7v9h-7z" fill="#fff" stroke="#666"/><path d="M5 4.500h4M5 6.500h4M5 8.500h4" stroke="#888"/></svg></button>
            <button aria-label="Page break view"><svg width="14" height="12" viewBox="0 0 14 12"><rect x=".5" y=".5" width="13" height="11" fill="#b4b7bc" stroke="#555a60"/><path d="M.5.5h4v6h-4zM4.500.5h4v6h-4z" fill="#fff" stroke="#555a60"/></svg></button>
        </div>
        <span class="w-[46px] text-center">96%</span>
        <button aria-label="Zoom out"><svg width="16" height="16" viewBox="0 0 16 16"><circle cx="8" cy="8" r="7.500" fill="#f4f5f6" stroke="#666a70"/><path d="M4 8h8" stroke="#555" stroke-width="2"/></svg></button>
        <input type="range" aria-label="Zoom" min="0" max="100" value="48" class="w-[100px] h-4 appearance-none bg-transparent [&::-webkit-slider-runnable-track]:h-px [&::-webkit-slider-runnable-track]:bg-[#7c8087] [&::-webkit-slider-thumb]:appearance-none [&::-webkit-slider-thumb]:w-[9px] [&::-webkit-slider-thumb]:h-3 [&::-webkit-slider-thumb]:-mt-1.5 [&::-webkit-slider-thumb]:bg-white [&::-webkit-slider-thumb]:border [&::-webkit-slider-thumb]:border-[#555a60] [&::-webkit-slider-thumb]:rounded-b-full">
        <button aria-label="Zoom in"><svg width="16" height="16" viewBox="0 0 16 16"><circle cx="8" cy="8" r="7.500" fill="#f4f5f6" stroke="#666a70"/><path d="M4 8h8M8 4v8" stroke="#555" stroke-width="2"/></svg></button>
    </footer>

    <script>
        const grid = document.getElementById('grid');
        const labels = document.getElementById('labels');
        const legend = document.getElementById('legend');

        // left axis with grid lines
        const left = [239, 277, 315, 353, 392, 430, 468, 506, 544, 583, 621, 659, 697, 735, 774];
        left.forEach((y, i) => {
            grid.innerHTML += `<path d="M430 ${y + 0.5}H1185"/>`;
            labels.innerHTML += `<text x="423" y="${y + 4}" text-anchor="end">${(3 - i * 0.5).toFixed(3)}%</text>`;
        });

        // right axis
        const right = [239, 287, 336, 385, 433, 482, 530, 579, 628, 676, 725, 774];
        right.forEach((y, i) => {
            grid.innerHTML += `<path d="M1185 ${y + 0.5}h4"/>`;
            labels.innerHTML += `<text x="1197" y="${y + 4}">${100 - i * 20}</text>`;
        });

        // dates
        const dates = [[434, '6/30'], [503, '7/31'], [571, '8/31'], [638, '9/30'], [706, '10/3'], [773, '11/3'], [841, '12/3'], [910, '1/31'], [974, '2/29'], [1043, '3/31'], [1109, '4/30'], [1178, '5/31']];
        dates.forEach(([x, d]) => {
            grid.innerHTML += `<path d="M${x + 0.5} 775v4"/>`;
            labels.innerHTML += `<text transform="translate(${x + 12} 788) rotate(-45)" text-anchor="end">${d}...</text>`;
        });
        grid.innerHTML += '<path d="M434.5 239V775M1184.5 239V775" stroke-width="1.5"/>';

        // legend
        const series = [
            ['20 DMF', '#4a7ebb', 2],
            ['OB-OS', '#00b050', 2],
            ['3 per. Mov. Avg. (20 DMF)', '#ff0000', 1],
            ['5 per. Mov. Avg. (20 DMF)', '#00b050', 1],
            ['10 per. Mov. Avg. (20 DMF)', '#a6a6b0', 1],
            ['20 per. Mov. Avg. (20 DMF)', '#808080', 1]
        ];
        series.forEach(([name, color, width], i) => {
            const y = 207 + i * 23;
            legend.innerHTML += `<path d="M1043.5 ${y + (width === 1 ? 0.5 : 0)}h26" stroke="${color}" stroke-width="${width}"/><text x="1071" y="${y + 4}">${name}</text>`;
        });
    </script>
</body>
</html>
